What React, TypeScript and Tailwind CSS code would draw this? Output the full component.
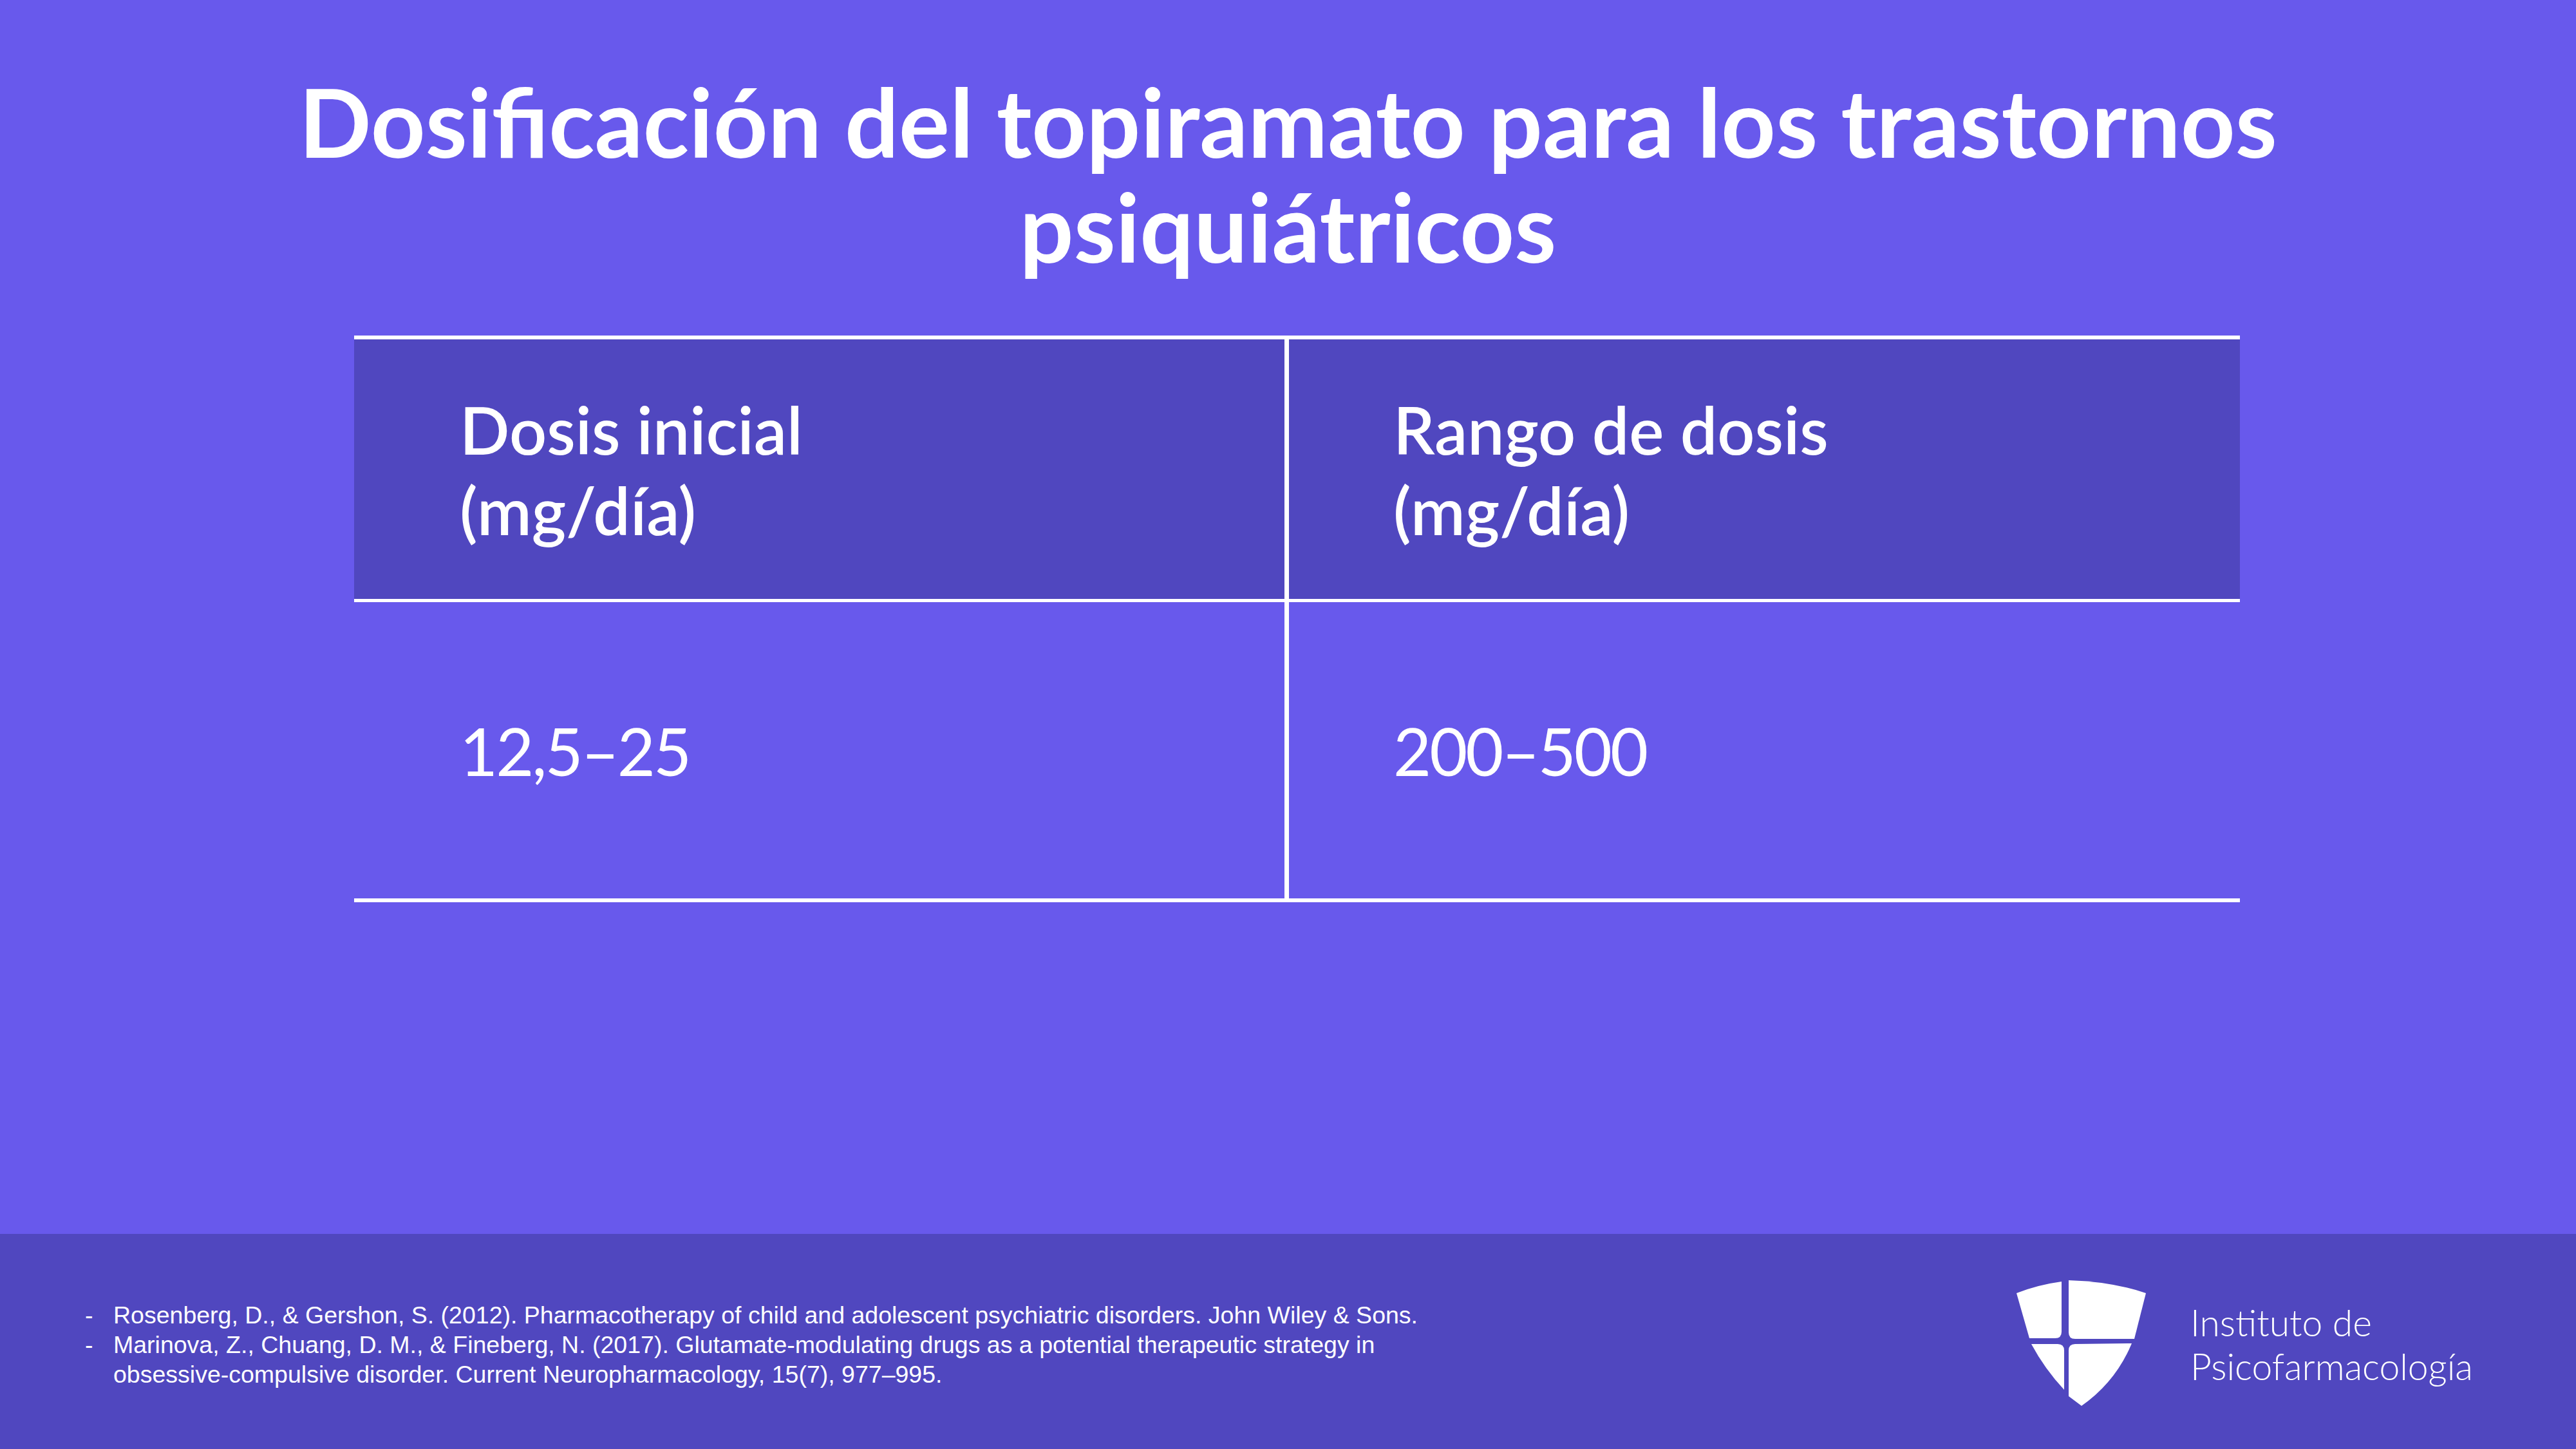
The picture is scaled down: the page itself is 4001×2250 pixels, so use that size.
import React from "react";

const Shield = () => (
  <svg width="220" height="210" viewBox="0 0 220 210" className="shrink-0">
    <g fill="#ffffff">
      <path d="M12,28 Q45,15 82,10 L82,88 Q82,98 72,98 L32,98 Z" />
      <path d="M93,8 Q160,10 213,28 L195,99 L103,99 Q93,99 93,89 Z" />
      <path d="M35,107 L76,107 Q86,107 86,117 L86,178 Q56,146 35,107 Z" />
      <path d="M93,117 Q93,107 103,107 L191,106 Q166,166 113,203 L93,188 Z" />
    </g>
  </svg>
);

export default function App() {
  return (
    <div className="w-[4001px] h-[2250px] flex flex-col bg-[#6859ec] text-white overflow-hidden">
      <div className="flex-1 flex flex-col">
        <h1
          className="pt-[107px] text-center text-[148px] leading-[163px] font-bold"
          style={{ fontFamily: "Lato, 'Noto Sans', sans-serif" }}
        >
          Dosificación del topiramato para los trastornos
          <br />
          psiquiátricos
        </h1>
        <div
          className="mt-[88px] ml-[550px] w-[2929px] flex flex-col"
          style={{ fontFamily: "Lato, 'Noto Sans', sans-serif" }}
        >
          <div className="h-[6px] bg-white" />
          <div className="flex h-[403px] bg-[#5047bf]">
            <div className="w-[1445px] flex items-center pl-[164px] text-[102px] leading-[125px] font-semibold">
              <div>
                Dosis inicial
                <br />
                (mg/día)
              </div>
            </div>
            <div className="w-[7px] bg-white" />
            <div className="flex-1 flex items-center pl-[162px] text-[102px] leading-[125px] font-semibold">
              <div>
                Rango de dosis
                <br />
                (mg/día)
              </div>
            </div>
          </div>
          <div className="h-[5px] bg-white" />
          <div className="flex h-[460px]">
            <div className="w-[1445px] flex items-center pl-[164px] text-[102px] leading-[125px] font-normal tracking-[-3px]">
              12,5–25
            </div>
            <div className="w-[7px] bg-white" />
            <div className="flex-1 flex items-center pl-[162px] text-[102px] leading-[125px] font-normal tracking-[-3px]">
              200–500
            </div>
          </div>
          <div className="h-[6px] bg-white" />
        </div>
      </div>
      <div className="h-[334px] bg-[#5047bf] flex items-center">
        <div
          className="w-[3120px] pl-[132px] text-[37.5px] leading-[46px] pt-[10px]"
          style={{ fontFamily: "'Liberation Sans', Arial, sans-serif" }}
        >
          <div className="flex">
            <span className="w-[44px] shrink-0">-</span>
            <span>
              Rosenberg, D., &amp; Gershon, S. (2012). Pharmacotherapy of child and adolescent psychiatric disorders. John Wiley &amp; Sons.
            </span>
          </div>
          <div className="flex">
            <span className="w-[44px] shrink-0">-</span>
            <span>
              <span className="block">
                Marinova, Z., Chuang, D. M., &amp; Fineberg, N. (2017). Glutamate-modulating drugs as a potential therapeutic strategy in
              </span>
              <span className="block">
                obsessive-compulsive disorder. Current Neuropharmacology, 15(7), 977–995.
              </span>
            </span>
          </div>
        </div>
        <div className="flex items-center gap-[62px] pt-[4px]">
          <Shield />
          <div
            className="text-[57px] leading-[68px] font-light pt-[4px]"
            style={{ fontFamily: "Lato, 'Noto Sans', sans-serif" }}
          >
            Instituto de
            <br />
            Psicofarmacología
          </div>
        </div>
      </div>
    </div>
  );
}
